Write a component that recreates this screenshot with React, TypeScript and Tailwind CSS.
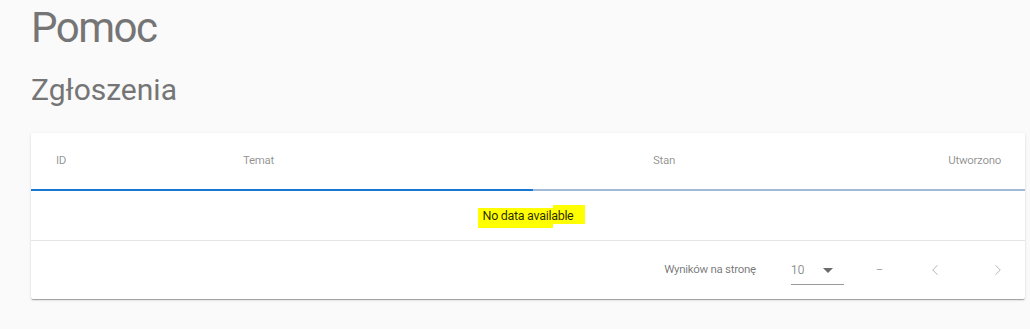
import { ChevronLeft, ChevronRight } from 'lucide-react';

const columns = [
  { label: 'ID', className: 'pl-[25px]' },
  { label: 'Temat', className: 'pl-[24px]' },
  { label: 'Stan', className: 'pl-[24px]' },
  { label: 'Utworzono', className: 'pr-[24px] text-right' },
];

export default function App() {
  return (
    <div
      className="min-h-[329px] w-full bg-[#fafafa] pl-[31px] pr-[5px] pt-[4px] text-[#757575]"
      style={{ fontFamily: 'Roboto, "Noto Sans", sans-serif' }}
    >
      <h1 className="text-[42px] leading-[48px] font-normal tracking-[-1.5px]">Pomoc</h1>
      <h2 className="mt-[20px] text-[30px] leading-[36px] font-normal">Zgłoszenia</h2>

      {/* --- TABLE CARD --- */}
      <div className="mt-[25px] bg-white rounded-[2px] shadow-[0_2px_1px_-1px_rgba(0,0,0,0.2),0_1px_1px_0_rgba(0,0,0,0.14),0_1px_3px_0_rgba(0,0,0,0.12)]">
        <div className="grid h-[56px] grid-cols-[188px_410px_1fr_auto] items-center text-[11.5px] tracking-[-0.3px] text-black/45">
          {columns.map((col) => (
            <div key={col.label} className={col.className}>
              {col.label}
            </div>
          ))}
        </div>

        {/* loading bar */}
        <div className="flex h-[2px] bg-[#9fbbd8]">
          <div className="w-[502px] bg-[#1976d2]" />
        </div>

        <div className="flex h-[50px] items-center justify-center border-b border-black/10">
          <span className="relative inline-block text-[12.5px] leading-[20px] tracking-[-0.3px] text-black/85">
            <span className="absolute left-[-5px] top-[2px] h-[20px] w-[75px] bg-[#ffff00]" />
            <span className="absolute left-[70px] top-[-1px] h-[19px] w-[32px] bg-[#ffff00]" />
            <span className="relative">No data available</span>
          </span>
        </div>

        {/* --- FOOTER / PAGINATION --- */}
        <div className="flex h-[58px] items-center justify-end pr-[15px] text-[11.5px] tracking-[-0.3px] text-black/55">
          <span>Wyników na stronę</span>
          <div className="ml-[35px] flex h-[30px] w-[53px] items-center justify-between border-b border-black/40 pt-[2px]">
            <span className="text-[12.5px] text-black/45">10</span>
            <svg width="10" height="5" viewBox="0 0 10 5" className="mr-[11px]">
              <path d="M0 0h10L5 5z" fill="#6b6b6b" />
            </svg>
          </div>
          <span className="ml-[32px] text-black/40">–</span>
          <div className="ml-[40px] flex h-[24px] w-[24px] items-center justify-center text-black/30">
            <ChevronLeft size={18} strokeWidth={1.3} />
          </div>
          <div className="ml-[39px] flex h-[24px] w-[24px] items-center justify-center text-black/30">
            <ChevronRight size={18} strokeWidth={1.3} />
          </div>
        </div>
      </div>
    </div>
  );
}
